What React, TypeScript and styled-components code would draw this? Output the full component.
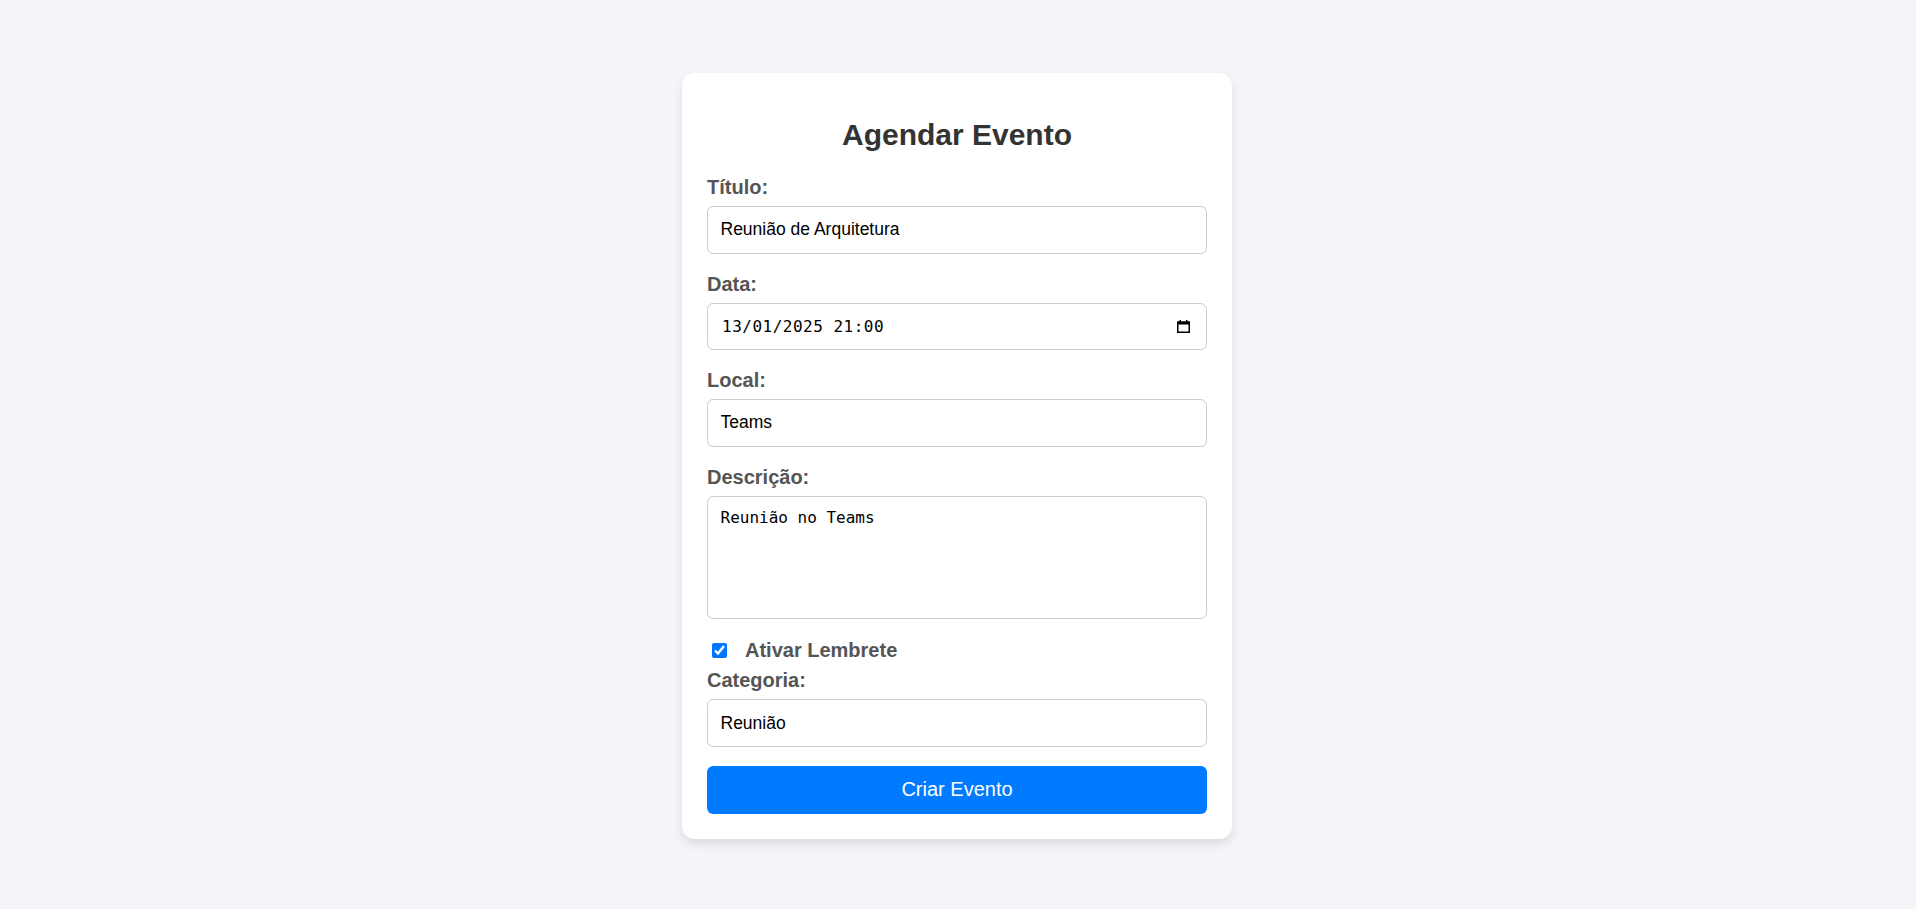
import React from "react";
import styled, { createGlobalStyle } from "styled-components";

const GlobalStyle = createGlobalStyle`
  html, body {
    margin: 0;
    padding: 0;
  }
  body {
    background: #f4f4f9;
    font-family: "Liberation Sans", Arial, sans-serif;
  }
  * { box-sizing: border-box; }
`;

const Page = styled.div`
  min-height: 100vh;
  display: flex;
  justify-content: center;
  align-items: center;
  padding: 3px 2px 0 0;
`;

const Card = styled.form`
  width: 550px;
  background: #ffffff;
  padding: 25px;
  border-radius: 12.5px;
  box-shadow: 0 5px 10px rgba(0, 0, 0, 0.1);
  display: flex;
  flex-direction: column;
`;

const Title = styled.h2`
  margin: 19.75px 0 23.5px;
  text-align: center;
  color: #333;
  font-size: 30px;
  line-height: 34.5px;
  font-weight: bold;
`;

const Label = styled.label`
  display: block;
  font-size: 20px;
  line-height: 23px;
  font-weight: bold;
  color: #555;
  margin-bottom: 7px;
`;

const fieldBase = `
  width: 100%;
  border: 1.25px solid #ccc;
  border-radius: 6.25px;
  background: #fff;
  color: #000;
  margin: 0 0 19px;
  outline: none;
`;

const TextInput = styled.input`
  ${fieldBase}
  height: 47.5px;
  padding: 0 12.5px;
  font-family: "Liberation Sans", Arial, sans-serif;
  font-size: 17.5px;
`;

const DateBox = styled.div`
  ${fieldBase}
  height: 47.5px;
  padding: 0 16px 0 14px;
  display: flex;
  align-items: center;
  justify-content: space-between;
`;

const DateText = styled.span`
  font-family: "DejaVu Sans Mono", "Liberation Mono", monospace;
  font-size: 16px;
  letter-spacing: 0.5px;
  color: #000;
`;

const TextArea = styled.textarea`
  ${fieldBase}
  display: block;
  height: 123.75px;
  padding: 12.5px;
  margin-bottom: 20px;
  resize: none;
  font-family: "DejaVu Sans Mono", "Liberation Mono", monospace;
  font-size: 16px;
  line-height: 18.75px;
`;

const CheckRow = styled.label`
  display: flex;
  align-items: center;
  height: 23px;
  margin-bottom: 7px;
  font-size: 20px;
  font-weight: bold;
  color: #555;
`;

const Check = styled.input`
  width: 15px;
  height: 15px;
  margin: 0 18px 0 5px;
  accent-color: #0075ff;
`;

const SubmitButton = styled.button`
  width: 100%;
  height: 47.75px;
  border: none;
  border-radius: 6.25px;
  background: #007bff;
  color: #fff;
  font-family: "Liberation Sans", Arial, sans-serif;
  font-size: 20px;
  cursor: pointer;
`;

const CalendarIcon = () => (
  <svg width="13" height="13" viewBox="0 0 13 13" aria-hidden="true">
    <rect x="2.5" y="0" width="1.5" height="3" fill="#000" />
    <rect x="9" y="0" width="1.5" height="3" fill="#000" />
    <rect x="0.75" y="2" width="11.5" height="10.25" fill="none" stroke="#000" strokeWidth="1.5" />
    <rect x="0.75" y="2" width="11.5" height="2.5" fill="#000" />
  </svg>
);

export default function App() {
  return (
    <>
      <GlobalStyle />
      <Page>
        <Card onSubmit={(e) => e.preventDefault()}>
          <Title>Agendar Evento</Title>

          <Label htmlFor="titulo">Título:</Label>
          <TextInput id="titulo" type="text" defaultValue="Reunião de Arquitetura" />

          <Label>Data:</Label>
          <DateBox>
            <DateText>13/01/2025 21:00</DateText>
            <CalendarIcon />
          </DateBox>

          <Label htmlFor="local">Local:</Label>
          <TextInput id="local" type="text" defaultValue="Teams" />

          <Label htmlFor="descricao">Descrição:</Label>
          <TextArea id="descricao" defaultValue="Reunião no Teams" />

          <CheckRow>
            <Check type="checkbox" defaultChecked />
            Ativar Lembrete
          </CheckRow>

          <Label htmlFor="categoria">Categoria:</Label>
          <TextInput id="categoria" type="text" defaultValue="Reunião" />

          <SubmitButton type="submit">Criar Evento</SubmitButton>
        </Card>
      </Page>
    </>
  );
}
